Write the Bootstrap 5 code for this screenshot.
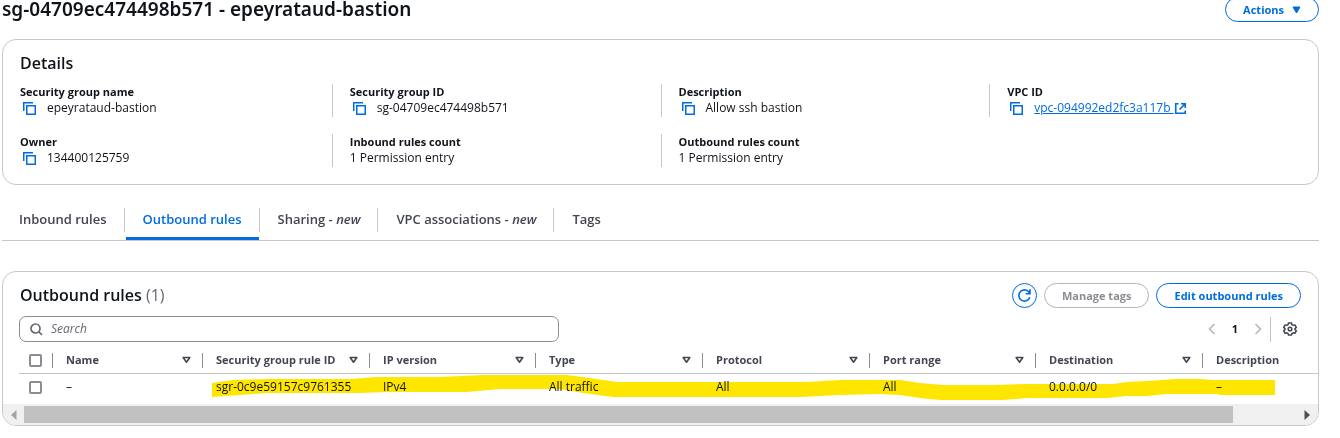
<!DOCTYPE html>
<html lang="en">
<head>
<meta charset="utf-8">
<meta name="viewport" content="width=device-width, initial-scale=1">
<title>Security group details</title>
<link href="https://cdn.jsdelivr.net/npm/bootstrap@5.3.0/dist/css/bootstrap.min.css" rel="stylesheet">
<style>
  :root { --ink:#0f141a; --ink-soft:#424650; --blue:#006ce0; --line:#c6c6cd; --muted:#656871; }
  body { font-family:"Open Sans","Noto Sans",sans-serif; font-size:12px; line-height:16px; color:var(--ink); background:#fff; overflow-x:hidden; }
  svg { display:block; flex:none; fill:none; }
  .page { padding:0 21px 0 2px; }
  .page-head { height:22px; }
  .page-head .pill { margin-top:-3px; }
  .page-title { font-family:"Noto Sans",sans-serif; font-size:19px; line-height:19px; font-weight:600; }
  .pill { --bs-btn-font-size:11px; --bs-btn-font-weight:700; --bs-btn-line-height:16px; --bs-btn-padding-y:3px; --bs-btn-padding-x:17px;
    --bs-btn-color:var(--blue); --bs-btn-border-color:var(--blue); --bs-btn-border-radius:14px; --bs-btn-hover-color:#002b66; --bs-btn-hover-border-color:#002b66;
    --bs-btn-disabled-color:#8c8c94; --bs-btn-disabled-border-color:#b4b4bb; --bs-btn-disabled-opacity:1; height:25px; white-space:nowrap; }
  .pill-round { width:25px; padding:0; }
  .panel { border:1px solid var(--line); border-radius:14px; }
  .panel-title { font-size:16px; line-height:20px; font-weight:600; }
  .details { margin-top:17px; padding:13px 0 17px; }
  .details .panel-title { padding-left:17px; }
  .facts { display:grid; grid-template-columns:repeat(4,1fr); row-gap:17px; margin-top:11px; }
  .fact { min-height:33px; padding-left:17px; border-left:1px solid var(--line); }
  .fact:nth-child(4n+1) { border-left-color:transparent; padding-left:16px; }
  .fact dt { font-size:11px; font-weight:700; }
  .fact dd { display:flex; align-items:center; margin:0; }
  .copy { border:0; background:none; padding:1px 11px 0 3px; }
  .details a { color:var(--blue); }
  .tabs { margin-top:23px; border-bottom:1px solid var(--line); height:33px; }
  .tabs .nav-link { position:relative; padding:3px 17px 13px; margin-right:1px; font-size:13px; line-height:16px; font-weight:600; color:var(--ink-soft); }
  .tabs .nav-item:not(:last-child) { background:linear-gradient(var(--line),var(--line)) right 0 top 0/1px 24px no-repeat; }
  .tabs .nav-item + .nav-item { padding-left:1px; }
  .tabs .nav-link.active { color:var(--blue); box-shadow:inset 0 -3px var(--blue); }
  .rules { margin-top:30px; overflow:hidden; }
  .bar-x { padding:0 17px 0 16px; gap:7px; }
  .rules-head { padding-top:11px; }
  .rules-head .panel-title { padding:0 0 2px 1px; }
  .count { color:var(--muted); font-weight:400; }
  .search { width:540px; height:26px; border:1px solid #8c8c94; border-radius:7px; padding:0 10px; }
  .search input { border:0; outline:0; width:100%; padding:0 0 0 8px; font-style:italic; color:var(--ink); background:none; }
  .search input::placeholder { color:var(--muted); opacity:1; }
  .plain { border:0; background:none; padding:0; color:#b4b4bb; }
  .page-no { font-size:11px; font-weight:700; color:var(--ink); text-decoration:none; }
  .divider { height:25px; }
  .table-area { position:relative; margin-left:16px; overflow:hidden; }
  .grid-table { table-layout:fixed; width:100%; border-collapse:separate; border-spacing:0; }
  .grid-table th { height:32px; padding:5px 0 0 14px; border-bottom:1px solid var(--line); color:var(--ink-soft); font-size:11px; font-weight:700; white-space:nowrap;
    background:linear-gradient(#8c8c94,#8c8c94) left 0 top 11px/1px 15px no-repeat; }
  .grid-table th:first-child { background:none; }
  .grid-table td { height:30px; padding:0 0 4px 14px; white-space:nowrap; }
  .grid-table th:first-child, .grid-table td:first-child { padding-left:10px; }
  .grid-table th > div { padding-right:11px; }
  .tick { appearance:none; display:block; width:13px; height:13px; margin:0; border:2px solid #8c8c94; border-radius:2px; background:#fff; }
  .tick:checked { background:var(--blue); border-color:var(--blue); }
  .marker { position:absolute; left:193px; top:31px; mix-blend-mode:multiply; pointer-events:none; }
  .scroller { height:21px; background:#f0f0f0; padding:0 8px; gap:7px; }
  .scroller-track { height:17px; }
  .scroller-thumb { width:95%; height:17px; background:#c1c1c1; }
</style>
</head>
<body>
<svg width="0" height="0" class="position-absolute" aria-hidden="true">
  <symbol id="copy" viewBox="0 0 13 13"><path d="M.75 9V.75H10M3.75 3.75h8.5v8.5h-8.5z" stroke="#006ce0" stroke-width="1.5"/></symbol>
  <symbol id="sort" viewBox="0 0 9 8"><path d="M1.2 1.5h6.6L4.5 6.2z" stroke="#424650" stroke-width="1.6" stroke-linejoin="round"/></symbol>
</svg>
<main class="page">
  <header class="page-head d-flex justify-content-between align-items-start">
    <h1 class="page-title m-0">sg-04709ec474498b571 - epeyrataud-bastion</h1>
    <button class="btn pill d-flex align-items-center" type="button">Actions
      <svg class="ms-2" width="9" height="8"><path d="M1 1h7L4.500 7z" fill="#006ce0" stroke="#006ce0" stroke-linejoin="round"/></svg></button>
  </header>

  <section class="panel details">
    <h2 class="panel-title m-0">Details</h2>
    <dl class="facts mb-0">
      <div class="fact"><dt>Security group name</dt><dd><button class="copy" type="button" aria-label="Copy name"><svg width="13" height="13"><use href="#copy"/></svg></button>epeyrataud-bastion</dd></div>
      <div class="fact"><dt>Security group ID</dt><dd><button class="copy" type="button" aria-label="Copy ID"><svg width="13" height="13"><use href="#copy"/></svg></button>sg-04709ec474498b571</dd></div>
      <div class="fact"><dt>Description</dt><dd><button class="copy" type="button" aria-label="Copy description"><svg width="13" height="13"><use href="#copy"/></svg></button>Allow ssh bastion</dd></div>
      <div class="fact"><dt>VPC ID</dt><dd><button class="copy" type="button" aria-label="Copy VPC ID"><svg width="13" height="13"><use href="#copy"/></svg></button><a class="d-flex align-items-center" href="#">vpc-094992ed2fc3a117b&nbsp;<svg width="13" height="13"><path d="M4.500 1.750H1.750v9.500h9.500V8.500M7 1.750h4.250V6M11 2 5.500 7.500" stroke="#006ce0" stroke-width="1.600"/></svg></a></dd></div>
      <div class="fact"><dt>Owner</dt><dd><button class="copy" type="button" aria-label="Copy owner"><svg width="13" height="13"><use href="#copy"/></svg></button>134400125759</dd></div>
      <div class="fact"><dt>Inbound rules count</dt><dd>1 Permission entry</dd></div>
      <div class="fact"><dt>Outbound rules count</dt><dd>1 Permission entry</dd></div>
    </dl>
  </section>

  <ul class="nav tabs flex-nowrap">
    <li class="nav-item"><a class="nav-link" href="#">Inbound rules</a></li>
    <li class="nav-item"><a class="nav-link active" aria-current="page" href="#">Outbound rules</a></li>
    <li class="nav-item"><a class="nav-link" href="#">Sharing - <em>new</em></a></li>
    <li class="nav-item"><a class="nav-link" href="#">VPC associations - <em>new</em></a></li>
    <li class="nav-item"><a class="nav-link" href="#">Tags</a></li>
  </ul>

  <section class="panel rules">
    <div class="bar-x rules-head d-flex align-items-center">
      <h2 class="panel-title m-0 me-auto">Outbound rules <span class="count">(1)</span></h2>
      <button class="btn pill pill-round d-flex align-items-center justify-content-center" type="button" aria-label="Refresh">
        <svg width="15" height="15"><path d="M12.800 9.200A5.600 5.600 0 1 1 12.600 5.200M13 1.300V5.700H8.600" stroke="#006ce0" stroke-width="1.600"/></svg></button>
      <button class="btn pill" type="button" disabled>Manage tags</button>
      <button class="btn pill" type="button">Edit outbound rules</button>
    </div>
    <div class="bar-x d-flex align-items-center justify-content-between pt-2">
      <label class="search d-flex align-items-center">
        <svg width="13" height="13"><circle cx="5.500" cy="5.500" r="4.500" stroke="#656871" stroke-width="1.700"/><path d="M8.800 8.800 12 12" stroke="#656871" stroke-width="1.700"/></svg>
        <input type="text" placeholder="Search" aria-label="Search">
      </label>
      <div class="d-flex align-items-center pe-1">
        <button class="plain" type="button" aria-label="Previous page"><svg width="8" height="12"><path d="M6.500 1 1.500 6l5 5" stroke="currentColor" stroke-width="1.500"/></svg></button>
        <a class="page-no px-3" href="#">1</a>
        <button class="plain" type="button" aria-label="Next page"><svg width="8" height="12"><path d="m1.500 1 5 5-5 5" stroke="currentColor" stroke-width="1.500"/></svg></button>
        <span class="vr divider mx-2"></span>
        <button class="plain ps-1" type="button" aria-label="Settings"><svg width="14" height="14" viewBox="0 0 14 14"><path d="M5.500 1h3l.5 1.700 1.200.7 1.700-.5 1.400 2.500L12 6.600v1l1.300 1.200-1.400 2.500-1.700-.5-1.200.7-.5 1.500h-3L5 11.500l-1.200-.7-1.700.5L.7 8.800 2 7.600v-1L.7 5.400l1.400-2.500 1.700.5L5 2.700z" stroke="#424650" stroke-width="1.500" stroke-linejoin="round"/><circle cx="7" cy="7" r="1.800" stroke="#424650" stroke-width="1.500"/></svg></button>
      </div>
    </div>
    <div class="table-area">
      <table class="grid-table">
        <colgroup><col style="width:33px"><col style="width:150px"><col style="width:167px"><col style="width:166px"><col style="width:167px"><col style="width:167px"><col style="width:166px"><col style="width:167px"><col></colgroup>
        <thead><tr>
          <th><input class="tick" type="checkbox" aria-label="Select all"></th>
          <th><div class="d-flex align-items-center justify-content-between">Name<svg width="9" height="8"><use href="#sort"/></svg></div></th>
          <th><div class="d-flex align-items-center justify-content-between">Security group rule ID<svg width="9" height="8"><use href="#sort"/></svg></div></th>
          <th><div class="d-flex align-items-center justify-content-between">IP version<svg width="9" height="8"><use href="#sort"/></svg></div></th>
          <th><div class="d-flex align-items-center justify-content-between">Type<svg width="9" height="8"><use href="#sort"/></svg></div></th>
          <th><div class="d-flex align-items-center justify-content-between">Protocol<svg width="9" height="8"><use href="#sort"/></svg></div></th>
          <th><div class="d-flex align-items-center justify-content-between">Port range<svg width="9" height="8"><use href="#sort"/></svg></div></th>
          <th><div class="d-flex align-items-center justify-content-between">Destination<svg width="9" height="8"><use href="#sort"/></svg></div></th>
          <th>Description</th>
        </tr></thead>
        <tbody><tr>
          <td><input class="tick" type="checkbox" aria-label="Select rule"></td>
          <td>–</td><td>sgr-0c9e59157c9761355</td><td>IPv4</td><td>All traffic</td><td>All</td><td>All</td><td>0.0.0.0/0</td><td>–</td>
        </tr></tbody>
      </table>
      <svg class="marker" width="1064" height="30" viewBox="212 373 1064 30" aria-hidden="true"><path fill="#ffe600" d="M212 383 233 380 267 379H350L377 377H440L483 375H567L590 378 617 382H807L840 380H900L920 383 943 385H993L1027 384H1113L1127 382 1147 381 1177 379H1200L1213 380H1275V395H1220L1217 394H1167L1147 396H1127L1107 398H1027L1003 400H940L920 398 900 395 880 394 840 395 800 397H613L583 393 560 389H500L467 392H387L360 393H267L240 395 212 397z"/></svg>
    </div>
    <div class="scroller d-flex align-items-center" aria-hidden="true">
      <svg width="6" height="10"><path d="M5.500 0v10L0 5z" fill="#a3a3a3"/></svg>
      <div class="scroller-track flex-grow-1"><div class="scroller-thumb"></div></div>
      <svg width="6" height="10"><path d="M.500 0v10L6 5z" fill="#505050"/></svg>
    </div>
  </section>
</main>
<script src="https://cdn.jsdelivr.net/npm/bootstrap@5.3.0/dist/js/bootstrap.bundle.min.js"></script>
</body>
</html>
